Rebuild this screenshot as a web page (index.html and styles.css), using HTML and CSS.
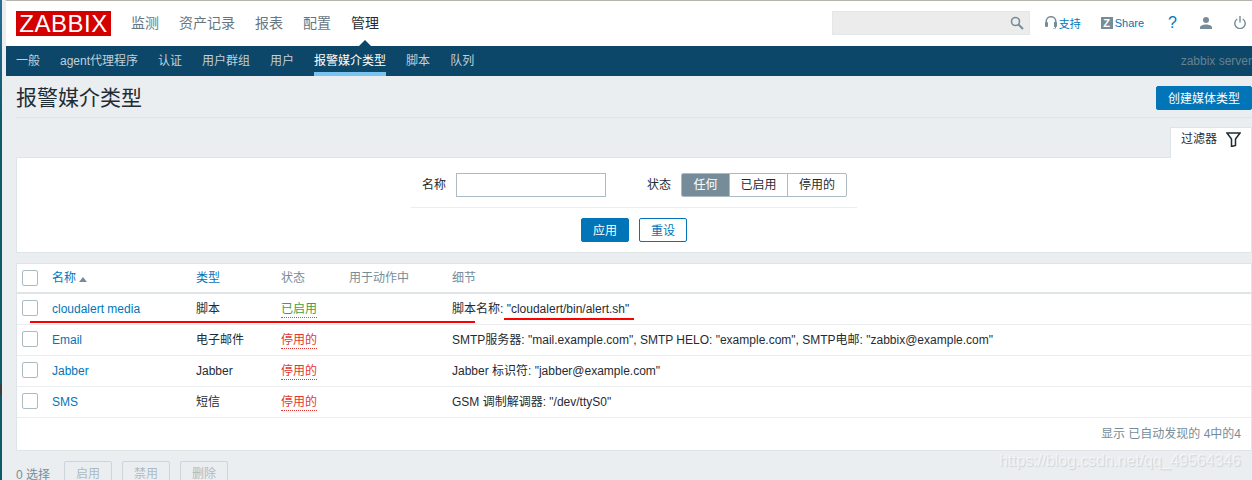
FILE: index.html
```html
<!doctype html>
<html lang="zh">
<head>
  <meta charset="utf-8">
  <title>报警媒介类型</title>
  <link rel="stylesheet" href="styles.css">
</head>
<body>
  <div class="desktop-edge"></div>
  <div class="page">
    <header class="topbar">
      <div class="logo">ZABBIX</div>
      <nav class="main-nav">
        <a>监测</a>
        <a>资产记录</a>
        <a>报表</a>
        <a>配置</a>
        <a class="active">管理</a>
      </nav>
      <div class="top-tools">
        <div class="search">
          <svg width="14" height="14" viewBox="0 0 14 14"><circle cx="5.5" cy="5.5" r="4" fill="none" stroke="#768d99" stroke-width="1.6"/><path d="M8.5 8.5L13 13" stroke="#768d99" stroke-width="2"/></svg>
        </div>
        <a class="tool tool-support">
          <svg width="12" height="13" viewBox="0 0 12 13"><path d="M1.2 7V5.500a4.800 4.800 0 0 1 9.600 0V7" fill="none" stroke="#768d99" stroke-width="1.500"/><rect x="0" y="6" width="3" height="5" rx="1" fill="#768d99"/><path d="M9 6h2a1 1 0 0 1 1 1v3a1 1 0 0 1-1 1v1.500H8V12h2v-1H9z" fill="#768d99"/></svg>
          支持
        </a>
        <a class="tool tool-share"><span class="z-icon">Z</span>Share</a>
        <a class="tool tool-help">?</a>
        <a class="tool tool-user">
          <svg width="12" height="12" viewBox="0 0 12 12"><circle cx="6" cy="3" r="3" fill="#768d99"/><path d="M0 12v-1.500c0-2 3-3 6-3s6 1 6 3V12z" fill="#768d99"/></svg>
        </a>
        <a class="tool tool-power">
          <svg width="12" height="13" viewBox="0 0 12 13"><path d="M3.300 3a5.200 5.200 0 1 0 5.400 0" fill="none" stroke="#768d99" stroke-width="1.400"/><path d="M6 0v6.500" stroke="#768d99" stroke-width="1.400"/></svg>
        </a>
      </div>
    </header>

    <nav class="sub-nav">
      <a>一般</a>
      <a>agent代理程序</a>
      <a>认证</a>
      <a>用户群组</a>
      <a>用户</a>
      <a class="active">报警媒介类型</a>
      <a>脚本</a>
      <a>队列</a>
      <span class="server-name">zabbix server</span>
    </nav>

    <main class="content">
      <div class="title-row">
        <h1>报警媒介类型</h1>
        <button class="btn btn-create">创建媒体类型</button>
      </div>

      <div class="filter-tab-row">
        <div class="filter-tab">
          <span class="filter-tab-label">过滤器</span>
          <svg width="15" height="15" viewBox="0 0 15 15"><path d="M1 1h13L9.500 7v6.500l-4 1V7z" fill="none" stroke="#1f2c33" stroke-width="1.500"/></svg>
        </div>
      </div>
      <section class="filter">
        <div class="filter-fields">
          <label class="filter-label">名称</label>
          <input class="filter-input" type="text">
          <label class="filter-label filter-label-state">状态</label>
          <div class="segmented">
            <span class="on">任何</span>
            <span>已启用</span>
            <span>停用的</span>
          </div>
        </div>
        <div class="filter-actions">
          <button class="btn btn-apply">应用</button>
          <button class="btn btn-reset">重设</button>
        </div>
      </section>

      <section class="list">
        <table>
          <thead>
            <tr>
              <th class="col-check"><span class="check"></span></th>
              <th class="col-name"><a>名称</a><span class="sort-up"></span></th>
              <th class="col-type"><a>类型</a></th>
              <th class="col-state">状态</th>
              <th class="col-action">用于动作中</th>
              <th>细节</th>
            </tr>
          </thead>
          <tbody>
            <tr>
              <td class="col-check"><span class="check"></span></td>
              <td><a>cloudalert media</a></td>
              <td>脚本</td>
              <td><span class="state state-on">已启用</span></td>
              <td></td>
              <td>脚本名称: "cloudalert/bin/alert.sh"</td>
            </tr>
            <tr>
              <td class="col-check"><span class="check"></span></td>
              <td><a>Email</a></td>
              <td>电子邮件</td>
              <td><span class="state state-off">停用的</span></td>
              <td></td>
              <td>SMTP服务器: "mail.example.com", SMTP HELO: "example.com", SMTP电邮: "zabbix@example.com"</td>
            </tr>
            <tr>
              <td class="col-check"><span class="check"></span></td>
              <td><a>Jabber</a></td>
              <td>Jabber</td>
              <td><span class="state state-off">停用的</span></td>
              <td></td>
              <td>Jabber 标识符: "jabber@example.com"</td>
            </tr>
            <tr>
              <td class="col-check"><span class="check"></span></td>
              <td><a>SMS</a></td>
              <td>短信</td>
              <td><span class="state state-off">停用的</span></td>
              <td></td>
              <td>GSM 调制解调器: "/dev/ttyS0"</td>
            </tr>
          </tbody>
        </table>
        <div class="paging">显示 已自动发现的 4中的4</div>
        <!-- hand-drawn red underlines from the screenshot -->
        <div class="mark mark-row"></div>
        <div class="mark mark-path"></div>
      </section>

      <div class="bulk">
        <span class="bulk-count">0 选择</span>
        <button class="btn btn-off">启用</button>
        <button class="btn btn-off">禁用</button>
        <button class="btn btn-off">删除</button>
      </div>
    </main>
  </div>
  <div class="watermark">https://blog.csdn.net/qq_49564346</div>
</body>
</html>
```

FILE: styles.css
```css
* {
  box-sizing: border-box;
}

html, body {
  margin: 0;
  height: 480px;
  overflow: hidden;
}

body {
  display: flex;
  position: relative;
  width: 1252px;
  background-color: #ebeef0;
  font-family: "Liberation Sans", "Noto Sans CJK SC", sans-serif;
  font-size: 12px;
  color: #1f2c33;
}

.desktop-edge {
  flex: 0 0 6px;
  background:
    linear-gradient(to right, transparent 2px, #ebeef0 2px),
    linear-gradient(to bottom, #2a6d94 0, #0e5a6b 120px, #0e5a6b 384px, #3a3f42 384px, #3a3f42 395px, #0e5a6b 395px);
}

.page {
  flex: 1;
  min-width: 0;
}

/* top bar */
.topbar {
  height: 46px;
  display: flex;
  align-items: center;
  background-color: #fff;
  border-top: 1px solid #b5b5ae;
  padding-left: 10px;
}

.logo {
  width: 95px;
  height: 25px;
  background-color: #d40000;
  color: #fff;
  font-size: 24px;
  line-height: 25px;
  letter-spacing: 0.5px;
  text-align: center;
  overflow: hidden;
}

.main-nav {
  display: flex;
  gap: 20px;
  margin-left: 20px;
  margin-bottom: 4px;
  font-size: 14px;
  color: #68777f;
}

.main-nav a.active {
  position: relative;
  color: #1f2c33;
}

.main-nav a.active::after {
  content: "";
  position: absolute;
  left: 6px;
  bottom: -16px;
  border: 8px solid transparent;
  border-top: 0;
  border-bottom-color: #0c4769;
}

.top-tools {
  display: flex;
  align-items: center;
  margin-left: auto;
  margin-bottom: 2px;
  color: #768d99;
  font-size: 11px;
}

.search {
  width: 198px;
  height: 24px;
  display: flex;
  align-items: center;
  justify-content: flex-end;
  padding-right: 5px;
  background-color: #ececec;
  border: 1px solid #e4e6e7;
}

.tool {
  display: flex;
  align-items: center;
}

.tool-support {
  gap: 2px;
  margin-left: 15px;
}

.tool-share {
  margin-left: 20px;
}

.z-icon {
  width: 12px;
  height: 12px;
  margin-right: 2px;
  background-color: #768d99;
  color: #fff;
  font-size: 11px;
  font-weight: bold;
  line-height: 12px;
  text-align: center;
}

.tool-help {
  margin-left: 24px;
  font-size: 16px;
}

.tool-user {
  margin-left: 23px;
}

.tool-power {
  margin-left: 22px;
  margin-right: 6px;
}

/* second level nav */
.sub-nav {
  height: 30px;
  display: flex;
  gap: 20px;
  padding-left: 10px;
  background-color: #0c4769;
  color: #c1d0d8;
  line-height: 30px;
}

.sub-nav a.active {
  color: #fff;
  border-bottom: 4px solid #79c4ee;
  height: 30px;
}

.server-name {
  margin-left: auto;
  color: #68808d;
  white-space: nowrap;
}

/* page content */
.content {
  padding: 0 0 0 10px;
}

.title-row {
  height: 42px;
  display: flex;
  align-items: flex-start;
  justify-content: space-between;
  border-bottom: 1px solid #dfe4e7;
}

h1 {
  margin: 6px 0 0;
  font-size: 21px;
  font-weight: normal;
  line-height: 32px;
  color: #1f2c33;
}

.btn {
  height: 24px;
  padding: 0 11px 2px;
  font-family: inherit;
  font-size: 12px;
  border-radius: 2px;
  border: 1px solid #0275b8;
}

.btn-create {
  margin-top: 10px;
  background-color: #0275b8;
  color: #fff;
}

.filter-tab-row {
  display: flex;
  justify-content: flex-end;
  margin-top: 9px;
}

.filter-tab {
  width: 82px;
  height: 31px;
  display: flex;
  justify-content: space-between;
  padding: 4px 10px 0 10px;
  line-height: 14px;
  background-color: #fff;
  border: 1px solid #dfe4e7;
  border-bottom: 0;
  margin-bottom: -1px;
  position: relative;
  z-index: 1;
}

.filter-tab-label {
  height: 14px;
}

.filter {
  height: 96px;
  background-color: #fff;
  border: 1px solid #dfe4e7;
}

.filter-fields {
  width: 446px;
  height: 50px;
  margin-left: 394px;
  display: flex;
  align-items: center;
  padding: 5px 0 0 11px;
  border-bottom: 1px solid #ebeef0;
}

.filter-label {
  margin-bottom: 3px;
}

.filter-label-state {
  margin-left: 41px;
}

.filter-input {
  width: 150px;
  height: 24px;
  margin-left: 10px;
  border: 1px solid #acbbc2;
  background-color: #fff;
}

.segmented {
  display: flex;
  margin-left: 10px;
  height: 24px;
  line-height: 22px;
  border: 1px solid #acbbc2;
  border-radius: 2px;
  overflow: hidden;
}

.segmented span {
  width: 59px;
  text-align: center;
  border-left: 1px solid #acbbc2;
}

.segmented span.on {
  width: 47px;
  border-left: 0;
  background-color: #768d99;
  color: #fff;
}

.segmented span.on + span {
  width: 58px;
}

.filter-actions {
  display: flex;
  justify-content: center;
  gap: 10px;
  margin-top: 10px;
}

.btn-apply {
  background-color: #0275b8;
  color: #fff;
}

.btn-reset {
  background-color: #fff;
  color: #0275b8;
}

/* media type list */
.list {
  position: relative;
  margin-top: 10px;
  height: 188px;
  background-color: #fff;
  border: 1px solid #dfe4e7;
}

table {
  width: 100%;
  border-collapse: collapse;
  table-layout: fixed;
}

th {
  height: 29px;
  padding: 0 5px 1px;
  font-weight: normal;
  line-height: 16px;
  text-align: left;
  color: #768d99;
  border-bottom: 2px solid #dfe4e7;
}

td {
  height: 31px;
  padding: 1px 5px 0;
  line-height: 16px;
  border-bottom: 1px solid #ebeef0;
}

a {
  color: #0275b8;
}

.main-nav a {
  color: inherit;
}

.sub-nav a {
  color: inherit;
}

.sub-nav a.active {
  color: #fff;
}

.col-check {
  width: 30px;
  padding: 0 0 1px 5px;
}

.col-name {
  width: 144px;
}

.col-type {
  width: 85px;
}

.col-state {
  width: 68px;
}

.col-action {
  width: 103px;
}

.check {
  display: block;
  width: 16px;
  height: 16px;
  background-color: #fff;
  border: 1px solid #acbbc2;
  border-radius: 2px;
}

.sort-up {
  display: inline-block;
  margin-left: 3px;
  border: 4px solid transparent;
  border-top: 0;
  border-bottom: 5px solid #768d99;
}

.state {
  padding-bottom: 1px;
  border-bottom: 1px dotted;
}

.state-on {
  color: #429e47;
}

.state-off {
  color: #e33734;
}

.paging {
  height: 32px;
  padding-right: 10px;
  line-height: 32px;
  text-align: right;
  color: #768d99;
}

.mark {
  position: absolute;
  height: 2px;
  background-color: #f00;
}

.mark-row {
  left: 13px;
  top: 57px;
  width: 445px;
}

.mark-path {
  left: 487px;
  top: 54px;
  width: 130px;
}

.bulk {
  display: flex;
  align-items: center;
  gap: 10px;
  margin-top: 10px;
  color: #768d99;
}

.bulk-count {
  margin-right: 4px;
}

.btn-off {
  width: 48px;
  padding: 0 0 2px;
  background-color: #ebeef0;
  border-color: #cdd5d9;
  color: #acbbc2;
}

.watermark {
  position: absolute;
  left: 999px;
  top: 452px;
  font-size: 16px;
  letter-spacing: -0.12px;
  color: rgba(255, 255, 255, 0.6);
  text-shadow: 1px 1px 1px rgba(120, 130, 135, 0.25);
  white-space: nowrap;
}
```
